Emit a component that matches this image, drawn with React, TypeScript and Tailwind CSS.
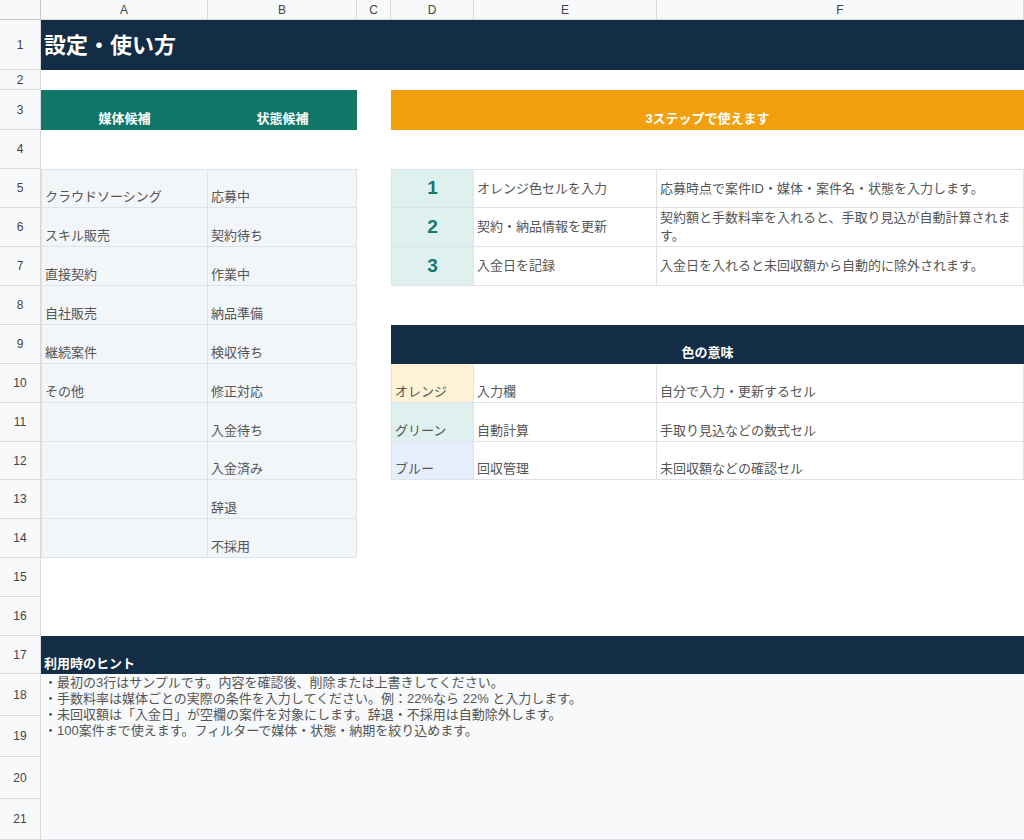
import React from "react";

const F = { fontFamily: '"Liberation Sans","Noto Sans CJK JP",sans-serif' };

function C({ cls, children }: { cls: string; children?: React.ReactNode }) {
  return <div className={"flex overflow-hidden whitespace-nowrap " + cls}>{children}</div>;
}

export default function App() {
  const cols = ["A", "B", "C", "D", "E", "F"];
  const colCls = ["col-start-2", "col-start-3", "col-start-4", "col-start-5", "col-start-6", "col-start-7"];
  const rowCls = [
    "row-start-2", "row-start-3", "row-start-4", "row-start-5", "row-start-6", "row-start-7", "row-start-8",
    "row-start-9", "row-start-10", "row-start-11", "row-start-12", "row-start-13", "row-start-14", "row-start-15",
    "row-start-16", "row-start-17", "row-start-18", "row-start-19", "row-start-20", "row-start-21", "row-start-22",
  ];
  const media = ["クラウドソーシング", "スキル販売", "直接契約", "自社販売", "継続案件", "その他", "", "", "", ""];
  const status = ["応募中", "契約待ち", "作業中", "納品準備", "検収待ち", "修正対応", "入金待ち", "入金済み", "辞退", "不採用"];
  const cell = "border-r border-b border-[#dde3e8] bg-[#f2f6f9] items-end px-[3px] pb-[1px] text-[13px] text-[#555]";
  return (
    <div style={F} className="w-[1024px] h-[840px] overflow-hidden bg-white">
      <div className="grid grid-cols-[41px_167px_149px_34px_83px_183px_367px] grid-rows-[20px_50px_20px_40px_39px_39px_39px_39px_39px_39px_39px_39px_38px_39px_39px_39px_39px_38px_42px_41px_42px_41px]">
        <div className="col-start-1 row-start-1 bg-[#f8f9fa] border-r border-b border-[#c7c7c7]" />
        {cols.map((c, i) => (
          <div key={c} className={colCls[i] + " row-start-1 bg-[#f8f9fa] border-r border-b border-[#d9d9d9] flex items-center justify-center text-[12px] text-[#444]"}>{c}</div>
        ))}
        {rowCls.map((r, i) => (
          <div key={r} className={r + " col-start-1 bg-[#f8f9fa] border-r border-b border-[#d9d9d9] flex items-center justify-center text-[12px] text-[#444]"}>{i + 1}</div>
        ))}
        <C cls="col-start-2 col-span-6 row-start-2 bg-[#122d45] items-center px-[3px] text-white text-[22px] font-bold">設定・使い方</C>
        <C cls="col-start-2 row-start-4 bg-[#0f7668] items-end justify-center pb-[2px] text-white text-[13px] font-bold">媒体候補</C>
        <C cls="col-start-3 row-start-4 bg-[#0f7668] items-end justify-center pb-[2px] text-white text-[13px] font-bold">状態候補</C>
        <C cls="col-start-5 col-span-3 row-start-4 bg-[#f29f0d] items-end justify-center pb-[2px] text-white text-[13px] font-bold">3ステップで使えます</C>
        {media.map((m, i) => (
          <React.Fragment key={i}>
            <C cls={"col-start-2 " + rowCls[i + 4] + " border-l " + cell}>{m}</C>
            <C cls={"col-start-3 " + rowCls[i + 4] + " " + cell}>{status[i]}</C>
          </React.Fragment>
        ))}
        <div className="col-start-2 col-span-2 row-start-6 border-t border-[#dde3e8] h-0" />
        {[
          ["1", "オレンジ色セルを入力", "応募時点で案件ID・媒体・案件名・状態を入力します。"],
          ["2", "契約・納品情報を更新", "契約額と手数料率を入れると、手取り見込が自動計算されます。"],
          ["3", "入金日を記録", "入金日を入れると未回収額から自動的に除外されます。"],
        ].map((s, i) => (
          <React.Fragment key={i}>
            <C cls={"col-start-5 " + rowCls[i + 4] + " border-l border-r border-b border-[#dde3e8] bg-[#dff1ee] items-center justify-center text-[19px] font-bold text-[#127a6b]" + (i === 0 ? " border-t" : "")}>{s[0]}</C>
            <C cls={"col-start-6 " + rowCls[i + 4] + " border-r border-b border-[#dde3e8] items-center px-[3px] text-[13px] text-[#555]" + (i === 0 ? " border-t" : "")}>{s[1]}</C>
            <div className={"col-start-7 " + rowCls[i + 4] + " border-r border-b border-[#dde3e8] flex items-center px-[3px] text-[13px] text-[#555] leading-[18px] whitespace-normal break-all" + (i === 0 ? " border-t" : "")}>{s[2]}</div>
          </React.Fragment>
        ))}
        <C cls="col-start-5 col-span-3 row-start-10 bg-[#122d45] items-end justify-center pb-[2px] text-white text-[13px] font-bold">色の意味</C>
        {[
          ["オレンジ", "bg-[#fff2d6]", "入力欄", "自分で入力・更新するセル"],
          ["グリーン", "bg-[#dff1ee]", "自動計算", "手取り見込などの数式セル"],
          ["ブルー", "bg-[#e6eefb]", "回収管理", "未回収額などの確認セル"],
        ].map((s, i) => (
          <React.Fragment key={i}>
            <C cls={"col-start-5 " + rowCls[i + 9] + " border-l border-r border-b border-[#dde3e8] items-end px-[3px] pb-[1px] text-[13px] text-[#555] " + s[1]}>{s[0]}</C>
            <C cls={"col-start-6 " + rowCls[i + 9] + " border-r border-b border-[#dde3e8] items-end px-[3px] pb-[1px] text-[13px] text-[#555]"}>{s[2]}</C>
            <C cls={"col-start-7 " + rowCls[i + 9] + " border-r border-b border-[#dde3e8] items-end px-[3px] pb-[1px] text-[13px] text-[#555]"}>{s[3]}</C>
          </React.Fragment>
        ))}
        <C cls="col-start-2 col-span-6 row-start-18 bg-[#122d45] items-end px-[3px] pb-[1px] text-white text-[13px] font-bold">利用時のヒント</C>
        <div className="col-start-2 col-span-6 row-start-19 row-span-4 bg-[#f7f9fb] border-b border-[#dde3e8] px-[3px] pt-[1px] text-[13px] leading-[16px] text-[#555]">
          <div>・最初の3行はサンプルです。内容を確認後、削除または上書きしてください。</div>
          <div>・手数料率は媒体ごとの実際の条件を入力してください。例：22%なら 22% と入力します。</div>
          <div>・未回収額は「入金日」が空欄の案件を対象にします。辞退・不採用は自動除外します。</div>
          <div>・100案件まで使えます。フィルターで媒体・状態・納期を絞り込めます。</div>
        </div>
      </div>
    </div>
  );
}
